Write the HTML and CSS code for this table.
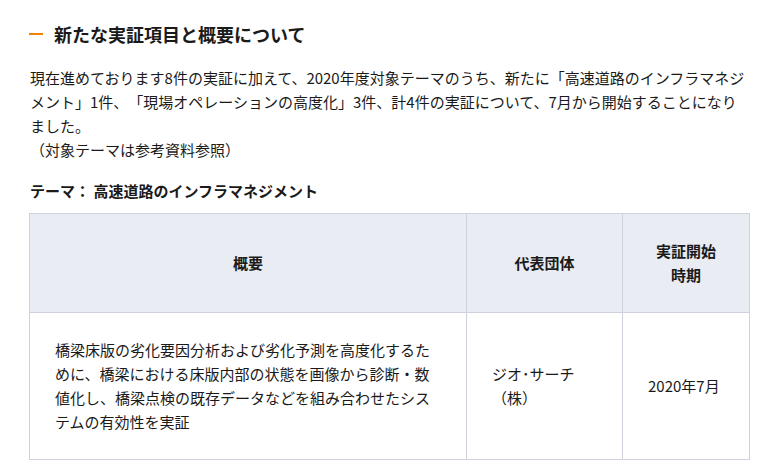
FILE: index.html
```html
<!DOCTYPE html>
<html lang="ja">
<head>
<meta charset="utf-8">
<title>新たな実証項目と概要について</title>
<link rel="stylesheet" href="styles.css">
</head>
<body>
<main class="page">
  <h2 class="heading"><span class="heading-bar"></span>新たな実証項目と概要について</h2>
  <p class="lead">現在進めております8件の実証に加えて、2020年度対象テーマのうち、新たに「高速道路のインフラマネジメント」1件、「現場オペレーションの高度化」3件、計4件の実証について、7月から開始することになりました。<br>（対象テーマは参考資料参照）</p>
  <h3 class="theme">テーマ： 高速道路のインフラマネジメント</h3>
  <table class="tbl">
    <colgroup>
      <col class="c1">
      <col class="c2">
      <col class="c3">
    </colgroup>
    <thead>
      <tr>
        <th>概要</th>
        <th>代表団体</th>
        <th>実証開始<br>時期</th>
      </tr>
    </thead>
    <tbody>
      <tr>
        <td>橋梁床版の劣化要因分析および劣化予測を高度化するために、橋梁における床版内部の状態を画像から診断・数値化し、橋梁点検の既存データなどを組み合わせたシステムの有効性を実証</td>
        <td>ジオ･サーチ（株）</td>
        <td>2020年7月</td>
      </tr>
    </tbody>
  </table>
</main>
</body>
</html>
```

FILE: styles.css
```css
html, body {
  margin: 0;
  padding: 0;
  background: #ffffff;
}
body {
  font-family: "Noto Sans CJK JP", "Noto Sans", sans-serif;
  color: #1a1a1a;
  font-size: 15px;
  line-height: 24px;
  text-spacing-trim: space-all;
}
.page {
  width: 720px;
  padding: 22px 0 0 29px;
}
.heading {
  display: flex;
  align-items: center;
  margin: 0;
  font-size: 18px;
  line-height: 24px;
  font-weight: 700;
  color: #1a1a1a;
}
.heading-bar {
  display: inline-block;
  width: 14px;
  height: 2.5px;
  background: #f08300;
  margin-right: 11px;
}
.lead {
  margin: 20px 0 0;
  padding-left: 1px;
}
.theme {
  margin: 17px 0 0;
  font-size: 15px;
  font-weight: 700;
  line-height: 24px;
  padding-left: 1px;
}
.tbl {
  margin-top: 10px;
  width: 720px;
  border-collapse: collapse;
  table-layout: fixed;
}
.c1 { width: 437px; }
.c2 { width: 156px; }
.c3 { width: 127px; }
.tbl th, .tbl td {
  border: 1px solid #cdd2dd;
  padding: 25px;
  vertical-align: middle;
  line-height: 24px;
}
.tbl th {
  background: #e9ecf2;
  font-weight: 700;
  text-align: center;
}
.tbl td {
  text-align: left;
  padding-top: 25px;
  padding-bottom: 25px;
}
```
